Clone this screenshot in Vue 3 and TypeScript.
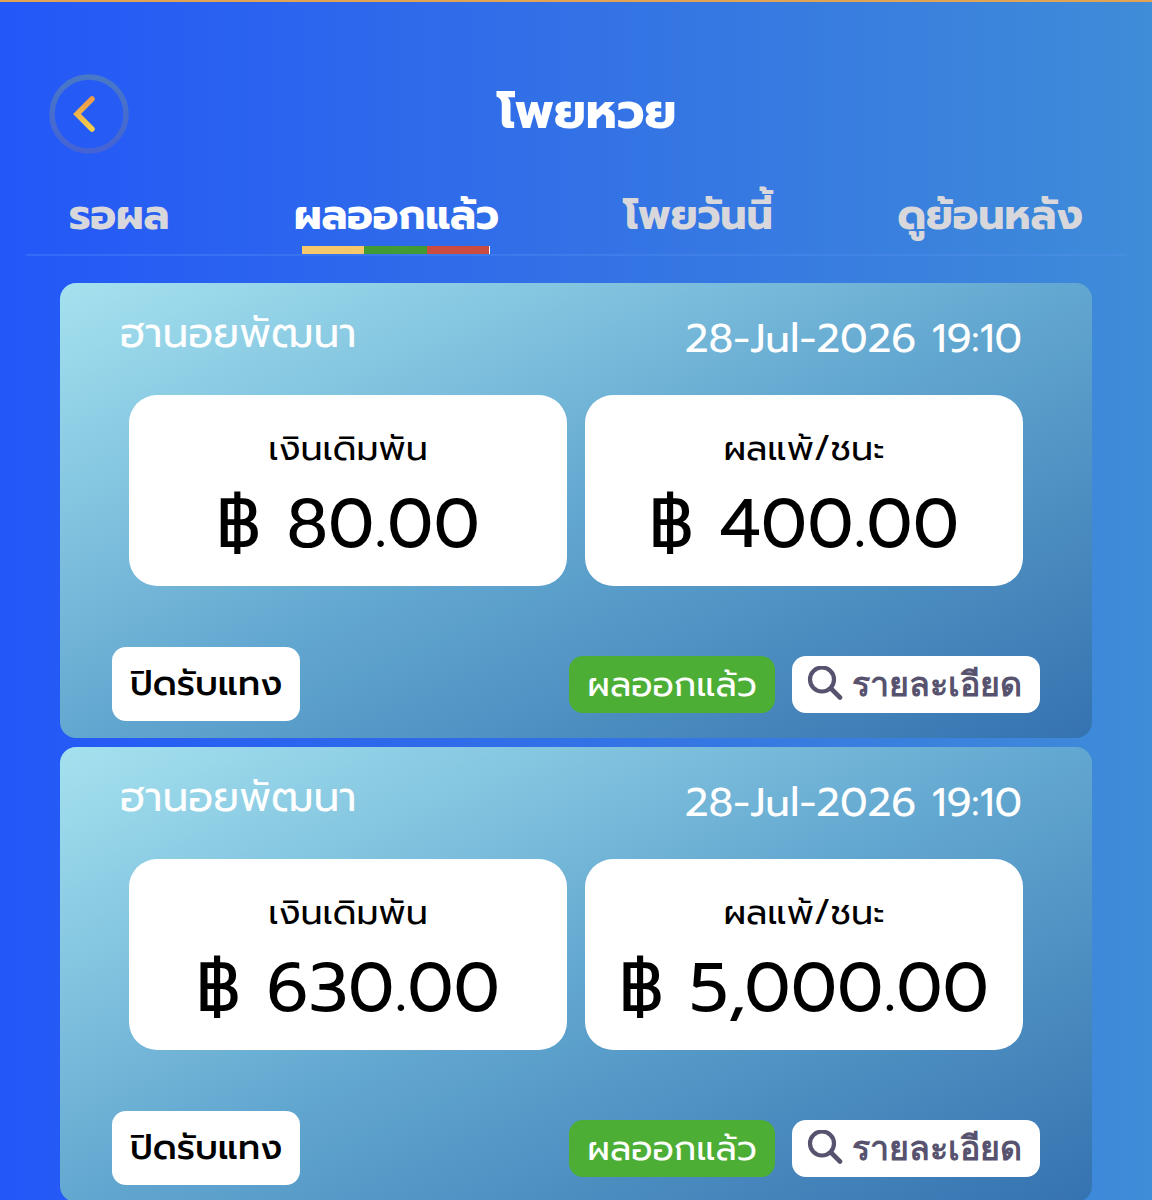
<script setup lang="ts">
import { ref } from 'vue'

interface Slip {
  id: number
  name: string
  date: string
  stake: string
  result: string
}

const tabs: string[] = ['รอผล', 'ผลออกแล้ว', 'โพยวันนี้', 'ดูย้อนหลัง']
const activeTab = ref<number>(1)

const slips: Slip[] = [
  { id: 1, name: 'ฮานอยพัฒนา', date: '28-Jul-2026 19:10', stake: '฿ 80.00', result: '฿ 400.00' },
  { id: 2, name: 'ฮานอยพัฒนา', date: '28-Jul-2026 19:10', stake: '฿ 630.00', result: '฿ 5,000.00' },
]
</script>

<template>
  <div class="app">
    <header class="header">
      <button class="back" type="button" aria-label="ย้อนกลับ">
        <svg viewBox="0 0 80 80" width="80" height="80" aria-hidden="true">
          <defs>
            <linearGradient id="ring" x1="0" y1="0" x2="0" y2="1">
              <stop offset="0" stop-color="#4878c6" />
              <stop offset="1" stop-color="#4563d4" />
            </linearGradient>
            <linearGradient id="chevron" x1="0" y1="0" x2="0" y2="1">
              <stop offset="0" stop-color="#ee9a48" />
              <stop offset="1" stop-color="#f2cf4a" />
            </linearGradient>
          </defs>
          <circle cx="40" cy="40" r="37" fill="none" stroke="url(#ring)" stroke-width="5.500" />
          <path d="M43 25 L28 40 L43 55" fill="none" stroke="url(#chevron)" stroke-width="5.500" stroke-linecap="round" stroke-linejoin="miter" />
        </svg>
      </button>
      <h1 class="title">โพยหวย</h1>
    </header>

    <nav class="tabs">
      <button
        v-for="(tab, i) in tabs"
        :key="tab"
        type="button"
        class="tab"
        :class="{ active: i === activeTab }"
        @click="activeTab = i"
      >
        {{ tab }}
      </button>
    </nav>

    <main class="list">
      <article v-for="slip in slips" :key="slip.id" class="card">
        <div class="card-head">
          <h2 class="name">{{ slip.name }}</h2>
          <time class="date">{{ slip.date }}</time>
        </div>
        <div class="boxes">
          <div class="box">
            <span class="label">เงินเดิมพัน</span>
            <span class="amount">{{ slip.stake }}</span>
          </div>
          <div class="box">
            <span class="label">ผลแพ้/ชนะ</span>
            <span class="amount">{{ slip.result }}</span>
          </div>
        </div>
        <div class="card-foot">
          <span class="closed">ปิดรับแทง</span>
          <span class="status">ผลออกแล้ว</span>
          <button class="detail" type="button">
            <svg viewBox="0 0 36 36" width="36" height="36" aria-hidden="true">
              <circle cx="15" cy="13.500" r="12" fill="none" stroke="#57536f" stroke-width="4.200" />
              <path d="M24 22.500 L33 31.500" stroke="#57536f" stroke-width="4.600" stroke-linecap="round" />
            </svg>
            <span>รายละเอียด</span>
          </button>
        </div>
      </article>
    </main>
  </div>
</template>

<style>
body {
  margin: 0;
}
</style>

<style scoped>
.app {
  box-sizing: border-box;
  height: 100vh;
  display: flex;
  flex-direction: column;
  overflow: hidden;
  border-top: 2px solid #e2a352;
  background: linear-gradient(90deg, #2357f8 0%, #2e69eb 34%, #377ae1 67%, #3f8cd8 100%);
  font-family: Prompt, "Noto Sans Thai", "Noto Sans", sans-serif;
  color: #fff;
}

button {
  border: 0;
  padding: 0;
  background: none;
  font: inherit;
  color: inherit;
  cursor: pointer;
}

.header {
  flex: none;
  display: grid;
  grid-template-columns: 80px 1fr;
  align-items: start;
  padding: 72px 107px 0 49px;
}

.back {
  height: 80px;
}

.back svg {
  display: block;
}

.title {
  margin: 0;
  text-align: center;
  font-size: 49px;
  line-height: 76px;
  font-weight: 700;
}

.tabs {
  flex: none;
  display: flex;
  justify-content: space-between;
  margin: 20px 26px 0;
  padding: 0 43px;
  border-bottom: 2px solid rgba(90, 150, 245, 0.3);
}

.tab {
  display: flex;
  flex-direction: column;
  align-items: center;
  height: 80px;
  padding-top: 10px;
  box-sizing: border-box;
  font-size: 41px;
  line-height: 62px;
  font-weight: 700;
  color: #d8d8dc;
}

.tab.active {
  color: #fff;
}

.tab.active::after {
  content: "";
  box-sizing: border-box;
  width: 188px;
  height: 8px;
  border-right: 1px solid #fff;
  background: linear-gradient(90deg, #f5c86c 0 33%, #429a35 33% 67%, #cb4b40 67% 100%);
}

.list {
  display: flex;
  flex-direction: column;
  gap: 9px;
  padding: 27px 60px 0;
  min-height: 0;
  overflow-y: auto;
  scrollbar-width: none;
}

.card {
  flex: none;
  border-radius: 16px;
  padding: 24px 52px 17px;
  background: linear-gradient(156deg, #a5e2ef 0%, #62a7d0 50%, #3572b0 100%);
}

.card-head {
  display: flex;
  justify-content: space-between;
  padding: 0 18px 0 8px;
}

.name {
  margin: 0;
  font-size: 41px;
  line-height: 52px;
  font-weight: 400;
}

.date {
  font-size: 41px;
  line-height: 62px;
}

.boxes {
  display: grid;
  grid-template-columns: 1fr 1fr;
  gap: 18px;
  margin: 26px 17px 0;
}

.box {
  display: flex;
  flex-direction: column;
  align-items: center;
  box-sizing: border-box;
  padding: 30px 16px 10px;
  border-radius: 28px;
  background: #fff;
  color: #000;
}

.label {
  font-size: 35px;
  line-height: 48px;
}

.amount {
  font-size: 69px;
  line-height: 103px;
  white-space: nowrap;
}

.card-foot {
  display: flex;
  align-items: center;
  gap: 17px;
  margin-top: 61px;
}

.closed,
.status,
.detail {
  box-sizing: border-box;
  padding: 0 17px;
  border-radius: 14px;
  font-size: 35px;
  white-space: nowrap;
}

.closed {
  margin-right: auto;
  padding: 0 18px;
  line-height: 74px;
  font-weight: 500;
  background: #fff;
  color: #000;
}

.status {
  padding: 0 18px;
  line-height: 57px;
  background: #4dae35;
}

.detail {
  display: flex;
  align-items: center;
  gap: 9px;
  height: 57px;
  padding: 0 18px 0 15px;
  background: #fff;
  color: #57536f;
  font-family: "Liberation Sans", sans-serif;
  font-size: 34px;
  font-weight: 700;
}
</style>
